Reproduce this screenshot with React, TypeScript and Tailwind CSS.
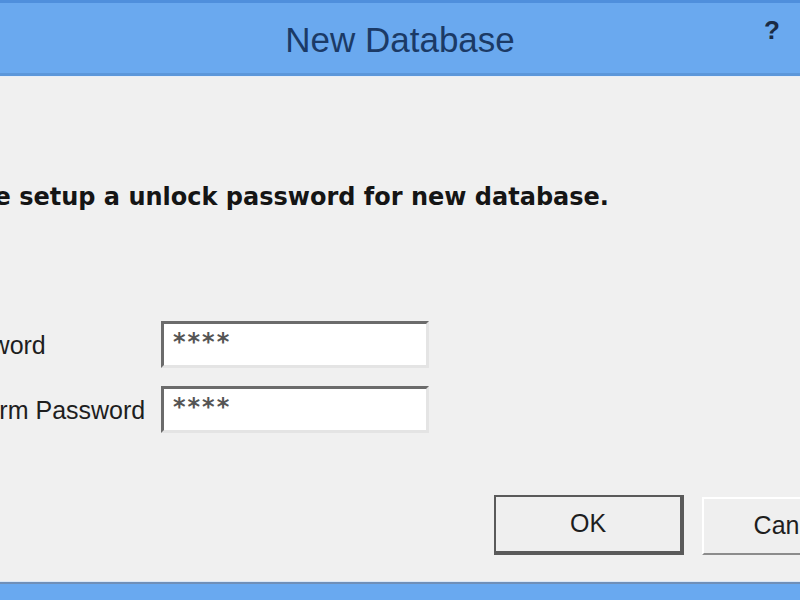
import React from 'react';

const sans = { fontFamily: "'Liberation Sans', Arial, sans-serif" };

function Field({ label, offset, value }: { label: string; offset: string; value: string }) {
  return (
    <div className="flex items-center">
      <div className="w-[161px] shrink-0 whitespace-nowrap text-[25px] leading-[30px] text-[#1e1e1e]">
        <span className={offset}>{label}</span>
      </div>
      <div className="flex h-[47px] w-[268px] items-center border-[3px] border-t-[#6b6b6b] border-l-[#6b6b6b] border-r-[#e4e4e4] border-b-[#e4e4e4] bg-white pl-[9px]">
        <span
          className="-mt-[6px] text-[24px] font-bold leading-[30px] tracking-[2px] text-[#555]"
          style={{ fontFamily: "'DejaVu Sans', sans-serif" }}
        >
          {value}
        </span>
      </div>
    </div>
  );
}

export default function App() {
  return (
    <div className="flex h-[600px] w-[800px] flex-col overflow-hidden bg-[#f0f0f0]" style={sans}>
      {/* Title bar */}
      <div className="grid h-[76px] shrink-0 grid-cols-[1fr_auto_1fr] border-t-[3px] border-t-[#4f8fdc] border-b-[3px] border-b-[#5c97da] bg-[#6aa9ef]">
        <div />
        <div className="pt-[17px] text-[35px] leading-[40px] text-[#1b3a66]">New Database</div>
        <div className="flex justify-end pr-[20px] pt-[12px]">
          <span className="text-[26px] font-bold leading-[30px] text-[#1a2b45]">?</span>
        </div>
      </div>
      <div className="h-px bg-[#e6eef8]" />

      {/* Body */}
      <div className="flex flex-1 flex-col">
        <div
          className="mt-[105px] ml-[-78px] whitespace-nowrap text-[24px] font-bold leading-[30px] text-[#151515]"
          style={{ fontFamily: "'DejaVu Sans', sans-serif" }}
        >
          Please setup a unlock password for new database.
        </div>

        <div className="mt-[109px] flex flex-col gap-[18px]">
          <Field label="Password" offset="ml-[-64px]" value="****" />
          <Field label="Confirm Password" offset="ml-[-59px]" value="****" />
        </div>

        <div className="mt-[62px] flex items-start gap-[18px] pl-[494px]">
          <button className="flex h-[60px] w-[190px] shrink-0 items-center justify-center border-2 border-b-[4px] border-r-[4px] border-[#5a5a5a] bg-[#efefef] text-[25px] text-[#1e1e1e]">
            OK
          </button>
          <button className="mt-[2px] flex h-[58px] w-[189px] shrink-0 items-center justify-center border-2 border-t-[#ffffff] border-l-[#ffffff] border-r-[#8c8c8c] border-b-[#8c8c8c] bg-[#efefef] pr-[8px] text-[25px] text-[#1e1e1e]">
            Cancel
          </button>
        </div>
      </div>

      {/* Bottom frame */}
      <div className="h-px bg-[#d9e7f7]" />
      <div className="h-[2px] bg-[#6f8fb8]" />
      <div className="h-[16px] bg-[#69a9f0]" />
    </div>
  );
}
